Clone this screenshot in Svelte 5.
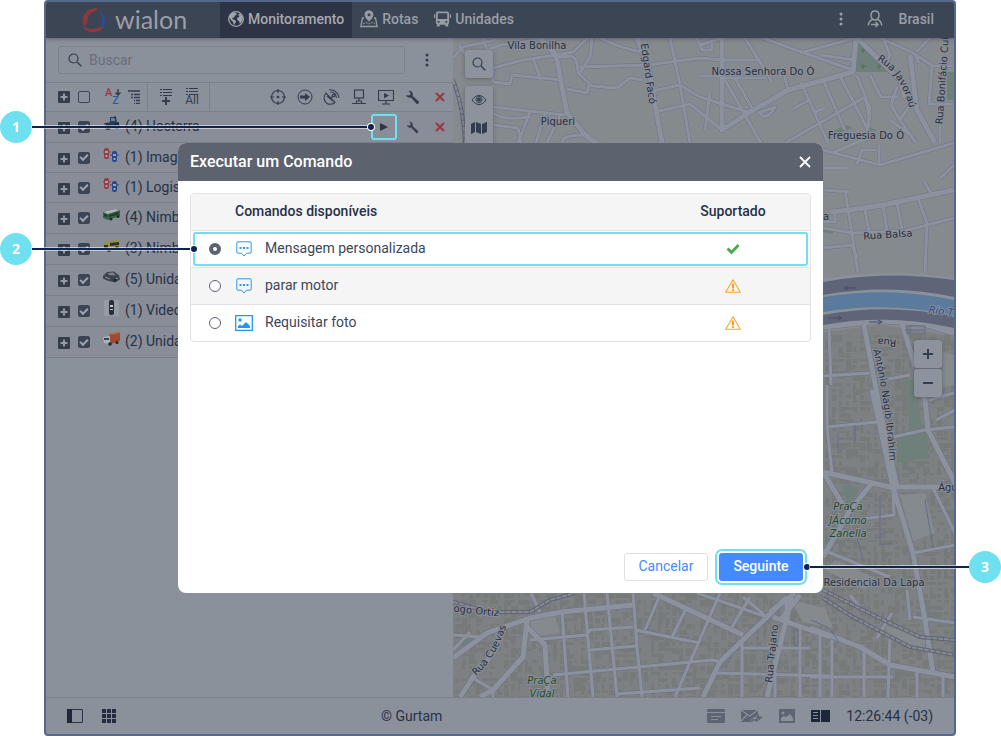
<script lang="ts">
  type Unit = { count: number; name: string; kind: string; short?: boolean };
  type Command = { id: string; label: string; icon: string; supported: boolean };
  type Label = { text: string; x: number; y: number; r?: number; cls?: string };

  const units: Unit[] = [
    { count: 4, name: "Hecterra", kind: "tractor" },
    { count: 1, name: "Imag", kind: "cars", short: true },
    { count: 1, name: "Logis", kind: "cars", short: true },
    { count: 4, name: "Nimb", kind: "bus" },
    { count: 3, name: "Nimb", kind: "yellow" },
    { count: 5, name: "Unida", kind: "car" },
    { count: 1, name: "Video", kind: "camera" },
    { count: 2, name: "Unida", kind: "truck" },
  ];

  const commands: Command[] = [
    { id: "custom", label: "Mensagem personalizada", icon: "message", supported: true },
    { id: "stop", label: "parar motor", icon: "message", supported: false },
    { id: "photo", label: "Requisitar foto", icon: "photo", supported: false },
  ];

  let selected = $state("custom");
  let query = $state("");

  const minorRoads = [
    "M453 58L463 47L495 40M459 45L466 56M483 38L487 50L500 45L530 41M493 68L523 60L556 55L573 52L588 38",
    "M533 58L541 80M493 82L510 84L512 75L563 80M493 68V82M558 57L572 56Q578 60 578 73L592 86L617 88L630 78L643 80",
    "M592 38L590 57L580 73M580 67L648 65M567 89L587 93L589 85M493 107L565 115M493 113Q503 121 530 117",
    "M530 112L518 143M545 113L536 143M560 115L547 143M493 125L518 128L521 143M563 143Q560 134 590 135",
    "M600 38Q620 48 641 52M648 65L700 58L722 60L760 60M648 92L680 85L700 97L748 112M700 76H722M722 78H767",
    "M655 112L690 104L722 130M670 38L680 85L690 143M700 45L722 38M710 92L705 130M697 38L702 50H712V43",
    "M745 38L772 82M763 38L810 55L853 70M725 80L762 145M735 78L752 108M782 66L788 90M801 82L828 143M823 80L845 130M840 76L868 130",
    "M785 143L865 97M793 109L811 99M815 112L825 108M758 113L775 107Q766 122 760 113M800 53L855 38M820 55L856 60",
    "M880 38L913 53L933 66L953 66M932 66L929 105M929 104H954M940 104V143M870 75L881 97H897M897 87L891 105L900 120L912 102",
    "M865 97L870 120M883 38L890 55L887 63M916 52L930 38M916 55L919 63M900 120L916 143M890 120L912 136",
    "M857 76L870 108L868 128M823 150L880 165L954 143M857 164L862 150H876M879 145V164M823 168H847M832 153L868 138",
    "M823 190L850 192M845 190L858 273M823 228L853 233L905 231L954 218M865 210L869 232M883 205L887 231M897 203L902 229M918 198L927 223",
    "M823 248L853 245M852 245L857 258M927 223L925 273M835 213V222H823M924 181L932 195M954 165L940 178",
    "M829 327L831 385M823 376L870 373M883 380L910 375M827 385V427L832 472M827 427L877 422M893 437L925 430L955 427",
    "M893 490L894 515L853 520M933 488L955 533M913 553L955 545M823 550L890 577M907 590L910 620M913 617L955 623M929 400L954 393M936 420L955 410",
    "M810 677H893M832 640V697M864 648V697M890 637L888 697M917 672V697M943 676V697M877 638L892 613M850 595L862 610",
    "M562 612L568 697M584 593L593 697M607 593L617 697M633 593L637 647L642 697M635 630L700 643M587 635L590 630L633 627",
    "M530 640L587 635M553 675L713 660L720 662M590 650L637 646M660 595L645 630M687 607L672 637M720 593L675 697M750 597L732 627",
    "M742 640V697M742 648H810M717 673L830 676M800 627V697M617 694L700 688M531 593L540 612M453 635L480 637M453 650L470 632",
    "M473 678L493 690M493 690V697M767 617L743 597M697 593L767 617M820 634V697M775 640V697",
  ];

  const majorRoads = [
    "M540 38L556 55L567 113L587 137L600 145",
    "M637 38L648 65L662 143",
    "M722 38V130L750 112L788 90L853 72L856 38",
    "M857 38L900 80L905 98M910 55L917 110L935 143",
    "M830 212L850 210L883 205L930 195L954 190",
    "M823 327L880 321L920 323L954 333",
    "M864 325L880 410L897 487M902 323L925 400L928 430L955 483",
    "M872 390L893 487L913 553L925 620L933 673",
    "M823 472L890 487H955M873 482L850 510L823 557M823 472L843 505",
    "M810 628L860 647L890 665L955 677",
    "M453 658L487 633L530 618L562 612L633 605",
    "M527 620L523 657L493 690L480 697M527 627L545 645L548 697",
    "M502 630L492 655L473 677L460 697",
    "M653 593L743 635M787 597L767 617L743 640L720 662L703 697M792 597L767 697M773 617L830 637",
    "M770 612L795 593M782 618L800 595M787 600V622",
  ];

  const rails = [
    "M453 80Q463 105 465 143",
    "M823 590L877 617L920 637L955 640",
    "M823 598L853 617L910 647L955 655",
    "M453 602L490 612H530L550 600L575 593",
  ];

  const labels: Label[] = [
    { text: "Vila Bonilha", x: 537, y: 49 },
    { text: "Piqueri", x: 558, y: 125 },
    { text: "Nossa Senhora Do Ó", x: 763, y: 75 },
    { text: "Freguesia Do Ó", x: 866, y: 139 },
    { text: "Edgard Facó", x: 645, y: 74, r: 82 },
    { text: "Rua Bonifácio Cuba", x: 946, y: 76, r: -86 },
    { text: "Rua Balsa", x: 888, y: 238, r: -4 },
    { text: "a", x: 826, y: 220 },
    { text: "Rua", x: 887, y: 339, r: 184 },
    { text: "Água", x: 951, y: 491 },
    { text: "Residencial Da Lapa", x: 874, y: 586 },
    { text: "ogo Ortiz", x: 476, y: 614, r: 6 },
    { text: "Rua Trajano", x: 775, y: 654, r: -84 },
    { text: "Rio Tie", x: 945, y: 315, r: 8, cls: "water" },
    { text: "PraÇa", x: 848, y: 510, cls: "park" },
    { text: "JÁcomo", x: 848, y: 524, cls: "park" },
    { text: "Zanella", x: 848, y: 537, cls: "park" },
    { text: "PraÇa", x: 542, y: 684, cls: "park" },
    { text: "Vidal", x: 542, y: 697, cls: "park" },
  ];

  // small building footprints, seeded so that the map looks the same on every load
  function footprints(x0: number, y0: number, x1: number, y1: number, seed: number): string {
    let s = seed;
    const rnd = () => (s = (s * 16807) % 2147483647) / 2147483647;
    let d = "";
    for (let y = y0; y < y1; y += 6) {
      for (let x = x0; x < x1; x += 7) {
        if (rnd() < 0.2) continue;
        const w = Math.round(2 + rnd() * 6);
        const h = Math.round(2 + rnd() * 5);
        d += `M${x} ${y}h${w}v${h}h-${w}z`;
      }
    }
    return d;
  }

  const buildings = [
    footprints(455, 594, 820, 697, 11),
    footprints(825, 335, 954, 480, 37),
    footprints(825, 492, 954, 697, 71),
  ];
</script>

{#snippet wrench(size: number)}
  <svg width={size} height={size} viewBox="0 0 16 16" aria-hidden="true">
    <path d="M1 5.2A4 4 0 0 0 6.300 8l5.800 6.300a1.600 1.600 0 0 0 2.400-2.200L8.200 6.400A4 4 0 0 0 3.800 1l2.100 2.200-.5 2-2 .6z" fill="currentColor" />
  </svg>
{/snippet}

{#snippet cross()}
  <svg width="10" height="10" viewBox="0 0 10 10" aria-hidden="true">
    <path d="M1 1l8 8M9 1l-8 8" stroke="#9c353f" stroke-width="2" />
  </svg>
{/snippet}

{#snippet plus()}
  <svg width="12" height="12" viewBox="0 0 12 12" aria-hidden="true">
    <rect width="12" height="12" rx="1" fill="#343d4c" />
    <path d="M6 2.500v7M2.500 6h7" stroke="#959aa4" stroke-width="2" />
  </svg>
{/snippet}

{#snippet magnifier()}
  <svg width="14" height="14" viewBox="0 0 14 14" fill="none" stroke="#343d4d" aria-hidden="true">
    <circle cx="5.500" cy="5.500" r="4.500" stroke-width="1.200" />
    <path d="M9 9l4.300 4.300" stroke-width="1.400" />
  </svg>
{/snippet}

{#snippet dots()}
  <svg width="4" height="14" viewBox="0 0 4 14" fill="currentColor" aria-hidden="true">
    <circle cx="2" cy="2" r="1.500" /><circle cx="2" cy="7" r="1.500" /><circle cx="2" cy="12" r="1.500" />
  </svg>
{/snippet}

{#snippet vehicle(kind: string)}
  <svg width="18" height="16" viewBox="0 0 18 16" aria-hidden="true">
    {#if kind === "tractor"}
      <path d="M7 1h6l1 5h2v5H5L3 8l4-2z" fill="#263d62" />
      <path d="M8 2h4v3H8z" fill="#71849b" />
      <circle cx="5" cy="11" r="3" fill="#20293a" /><circle cx="13.500" cy="10" r="3" fill="#20293a" />
      <circle cx="5" cy="11" r="1" fill="#7f8896" /><circle cx="13.500" cy="10" r="1" fill="#7f8896" />
      <path d="M12 0v3M1 8l4-1" stroke="#20293a" />
    {:else if kind === "cars"}
      <rect x="1" y="1" width="5" height="11" rx="2" fill="#963c43" />
      <path d="M2 4h3v2H2zM2.500 8h2v2h-2z" fill="#a1a6ae" /><path d="M0 4v2M7 4v2" stroke="#963c43" />
      <rect x="9" y="4" width="5" height="11" rx="2" fill="#29478c" />
      <path d="M10 7h3v2h-3zM10.500 11h2v2h-2z" fill="#a1a6ae" /><path d="M8 7v2M15 7v2" stroke="#29478c" />
    {:else if kind === "bus"}
      <path d="M0 5l12-3 5 1v6L5 13l-5-2z" fill="#31663e" />
      <path d="M0 5l12-3 5 1L5 7z" fill="#aeb5b8" /><path d="M1 7l3 1v2L1 9zM6 8l10-3v2L6 10z" fill="#253040" />
      <circle cx="8" cy="12" r="1.500" fill="#202632" /><circle cx="15" cy="9.500" r="1.500" fill="#202632" />
    {:else if kind === "yellow"}
      <path d="M0 6l6-3 10-1 1 2v6L5 13l-5-2z" fill="#9b9135" />
      <path d="M1 7h4v3H1zM7 5l9-1v3l-9 1z" fill="#29303b" />
      <circle cx="6" cy="12" r="2" fill="#222936" /><circle cx="14" cy="10" r="2" fill="#222936" />
    {:else if kind === "car"}
      <path d="M0 7l4-4 7-.5 5 4 1 4-5 3-8-2-4-2z" fill="#3d434d" />
      <path d="M5 4l5-.5 3 3-7-.5z" fill="#7f8690" /><path d="M2 8l5 2M12 10l3-1" stroke="#8d939d" />
      <circle cx="12" cy="11" r="1.500" fill="#1c2330" />
    {:else if kind === "camera"}
      <rect x="1" width="15" height="16" fill="#969ba3" />
      <rect x="6" y="0" width="5" height="15" rx="2" fill="#272f3c" />
      <path d="M7 5h3v2H7zM7 9h3v1H7z" fill="#c4c8cd" />
    {:else}
      <path d="M6 3l10-2 1 1v8L8 13z" fill="#a04a32" /><path d="M6 3l10-2 1 1-9 2z" fill="#bc694c" />
      <path d="M0 6l7-1v8l-6-1z" fill="#aeb2b8" /><path d="M1 7h5v2H1z" fill="#37465c" />
      <circle cx="7" cy="13" r="1.800" fill="#202733" /><circle cx="14" cy="11.500" r="1.500" fill="#202733" />
    {/if}
  </svg>
{/snippet}

<div class="page">
  <div class="window">
    <header class="topbar">
      <div class="logo">
        <svg width="25" height="26" viewBox="0 0 25 26" aria-hidden="true">
          <path d="M1 17C-1 8 6 1 14 1c2 0 1 3-1 3.500C6 6 6 11 5 16c-1 3-3 3-4 1z" fill="#8d3840" />
          <path d="M17 5c5 2 8 8 5 15-1 2-3 1-2-1 1-5 0-9-3-14z" fill="#2c4b9c" />
          <path d="M2 20c5 3 11 2 17 0 2 0 2 2 0 3-5 3-13 3-17-1-1-1-1-2 0-2z" fill="#8d3840" />
        </svg>
        <span>wialon</span>
      </div>
      <nav>
        <a class="tab active" href="#monitoring">
          <svg width="16" height="16" viewBox="0 0 16 16" aria-hidden="true">
            <circle cx="8" cy="8" r="7.300" fill="none" stroke="#a0a5ac" stroke-width="1.300" />
            <path d="M2 4l3-2.500 3 .5 1 1.500-2 1-1 2-2 .5 1 1.500 2 .5 1 1.500-1 2-1 1.500-1-3-2-2L1 6zM10 3l3 .5 1.800 3-.5 3L12 13l-1-3-2-1 .5-2.500 2-.5z" fill="#a0a5ac" />
          </svg>
          Monitoramento
        </a>
        <a class="tab" href="#routes">
          <svg width="18" height="18" viewBox="0 0 18 18" fill="none" stroke="#969ba4" aria-hidden="true">
            <path d="M4 8H2.500L.8 16.500h16.400L15.500 8H14" stroke-width="1.300" />
            <path d="M9 .8a4 4 0 0 0-4 4c0 2.500 4 6.500 4 6.500s4-4 4-6.500a4 4 0 0 0-4-4z" fill="#969ba4" />
            <circle cx="9" cy="4.800" r="1.500" fill="#3c4554" stroke="none" />
            <path d="M3 14l3-1.500 3 1.500 3-1.500 3 1.500" stroke-dasharray="2 1" />
          </svg>
          Rotas
        </a>
        <a class="tab" href="#units">
          <svg width="17" height="16" viewBox="0 0 18 16" fill="#969ba4" aria-hidden="true">
            <path d="M3 0h12l1 2v11h-1v3h-3v-2H6v2H3v-3H2V2zM4 2v6h10V2zM4 10v2h2v-2zM12 10v2h2v-2z" fill-rule="evenodd" />
            <path d="M0 3h1.300v4H0zM16.700 3H18v4h-1.300z" />
          </svg>
          Unidades
        </a>
      </nav>
      <div class="account">
        <button type="button" aria-label="Mais">{@render dots()}</button>
        <svg width="16" height="18" viewBox="0 0 16 18" fill="none" stroke="#969ba4" stroke-width="1.500" aria-hidden="true">
          <path d="M8 1C5 1 4 3 4 5.500S6 10 8 10s4-2 4-4.500S11 1 8 1z" />
          <path d="M5.500 9.500C3 10.500 1.500 12 1.300 15.500M10.500 9.500c2.500 1 4 2.500 4.200 6M4 14.500h7M8.500 12l2.500 2.500L8.500 17" />
        </svg>
        <span>Brasil</span>
      </div>
    </header>

    <div class="main">
      <aside class="sidebar">
        <div class="search">
          <label class="search-box">
            {@render magnifier()}
            <input type="text" placeholder="Buscar" aria-label="Buscar" bind:value={query} />
          </label>
          <button type="button" aria-label="Opções">{@render dots()}</button>
        </div>

        <div class="tools">
          <button class="slot" type="button" aria-label="Expandir tudo">{@render plus()}</button>
          <span class="slot"><input class="check" type="checkbox" aria-label="Selecionar tudo" /></span>
          <button class="tool az" type="button" aria-label="Ordenar">
            <span class="a">A</span><span class="z">Z</span>
            <svg width="6" height="7" viewBox="0 0 6 7" aria-hidden="true"><path d="M3 0v6M.5 3.500L3 6l2.500-2.500" stroke="#343d4d" stroke-width="1.500" fill="none" /></svg>
          </button>
          <button class="tool group" type="button" aria-label="Agrupar">
            <svg width="14" height="14" viewBox="0 0 14 14" aria-hidden="true"><path d="M1 1h12M4 4.500h2M7 4.500h6M4 7.500h2M7 7.500h6M7 10.500h1M9 10.500h4M7 13.300h1M9 13.300h4" stroke="#343d4d" stroke-width="1.300" /></svg>
          </button>
          <i></i>
          <button class="tool" type="button" aria-label="Adicionar">
            <svg width="14" height="16" viewBox="0 0 14 16" stroke="#343d4d" aria-hidden="true"><path d="M1 .5h2M4 .5h9M1 3.500h2M4 3.500h9M1 6.500h2M4 6.500h9" /><path d="M7 8v8M3 12h8" stroke-width="2" /></svg>
          </button>
          <button class="tool all" type="button">
            <svg width="14" height="7" viewBox="0 0 14 7" stroke="#343d4d" aria-hidden="true"><path d="M1 .5h2M4 .5h9M1 3.500h2M4 3.500h9M1 6.500h2M4 6.500h9" /></svg>
            All
          </button>
          <i></i>
          <div class="actions">
            <button type="button" aria-label="Localizar">
              <svg width="16" height="16" viewBox="0 0 16 16" fill="none" stroke="#343d4d" aria-hidden="true"><circle cx="8" cy="8" r="6.500" stroke-width="1.200" /><path d="M8 0v4M8 12v4M0 8h4M12 8h4" stroke-width="1.200" /><circle cx="8" cy="8" r="1" fill="#343d4d" /></svg>
            </button>
            <button type="button" aria-label="Seguir">
              <svg width="16" height="16" viewBox="0 0 16 16" aria-hidden="true"><circle cx="8" cy="8" r="7" fill="none" stroke="#343d4d" /><path d="M3 6.500h5V4l5 4-5 4V9.500H3z" fill="#343d4d" /></svg>
            </button>
            <button type="button" aria-label="Satélite">
              <svg width="17" height="16" viewBox="0 0 17 16" fill="none" stroke="#343d4d" stroke-width="1.100" aria-hidden="true"><path d="M3 4C0 8 1 13 4 14.500s6 .5 8-1zM8 9l2-2M7 3c3 0 6 2 6.500 6M6 .8c5-.5 9.500 3 10 8M4 7l6 5" /><circle cx="10.500" cy="6.500" r="1.300" /></svg>
            </button>
            <button type="button" aria-label="Conexão">
              <svg width="16" height="16" viewBox="0 0 16 16" fill="none" stroke="#343d4d" aria-hidden="true"><rect x="3.500" y="1" width="9" height="8" stroke-width="1.200" /><path d="M8 9v3M1 14.500h14M5.500 12h5v2.500h-5z" stroke-width="1.200" /></svg>
            </button>
            <button type="button" aria-label="Vídeo">
              <svg width="16" height="16" viewBox="0 0 16 16" aria-hidden="true"><path d="M.5 1.500h15v10H.5zM8 12v2.500M4 15h8" fill="none" stroke="#343d4d" stroke-width="1.200" /><path d="M6 4l5 2.500L6 9.500z" fill="#343d4d" /></svg>
            </button>
            <button type="button" aria-label="Propriedades">{@render wrench(15)}</button>
            <button type="button" aria-label="Remover tudo">{@render cross()}</button>
          </div>
        </div>

        <ul>
          {#each units as unit, i}
            <li class:short={unit.short}>
              <button class="slot expand" type="button" aria-label="Expandir">{@render plus()}</button>
              <span class="slot"><input class="check" type="checkbox" checked aria-label={unit.name} /></span>
              <span class="vehicle">{@render vehicle(unit.kind)}</span>
              <span class="name">({unit.count}) {unit.name}</span>
              {#if i === 0}
                <div class="actions">
                  <button class="run" type="button" aria-label="Executar comando">
                    <svg width="8" height="8" viewBox="0 0 8 8" aria-hidden="true"><path d="M0 0l8 4-8 4z" fill="#2d3443" /></svg>
                  </button>
                  <button type="button" aria-label="Propriedades">{@render wrench(13)}</button>
                  <button type="button" aria-label="Remover">{@render cross()}</button>
                </div>
              {/if}
            </li>
          {/each}
        </ul>
      </aside>

      <section class="map" aria-label="Mapa">
        <svg class="canvas" viewBox="453 38 501 659" preserveAspectRatio="xMinYMin slice">
          <rect x="453" y="38" width="501" height="659" fill="#858a8e" />
          <path d="M823 332L880 325L954 336V697H453V590H823z" fill="#7d8183" />
          <g class="blocks">
            {#each buildings as d}<path {d} />{/each}
          </g>
          <g fill="#858a8e">
            <path d="M530 620l25-5 5 18-28 4zM790 600l35 8 8 20-30-6zM918 345l36 10v30l-30 5zM835 560l40 18-10 12-40-20zM885 625l40 15v12l-35-12zM900 495l25-2 10 40-22 8z" />
          </g>
          <g fill="#6e8079">
            <path d="M858 40L890 72H855zM947 72h7v28h-7zM827 133l20-8 6 3-24 8zM867 125l10 6h-8zM823 228l10 2v4l-10-2z" />
            <path d="M897 437l30-4 2 25-32 5zM904 380h10l9 50-12 2zM842 485l18 2-12 18zM462 640l15-2-14 14zM542 668l4 4v6h-6z" />
          </g>
          <path d="M863 48v5M861 50h5M863 64v5M861 66h5M879 64v5M877 66h5" stroke="#4f7358" fill="none" />

          <g class="casing minor">{#each minorRoads as d}<path {d} />{/each}</g>
          <g class="casing major">{#each majorRoads as d}<path {d} />{/each}</g>
          <g class="fill minor">{#each minorRoads as d}<path {d} />{/each}</g>
          <g class="fill major">{#each majorRoads as d}<path {d} />{/each}</g>

          <path d="M823 279Q885 268 954 278V332Q890 316 823 327z" fill="#8b919a" />
          <path d="M823 282Q885 270 954 280V297Q890 283 823 295z" fill="#5f6579" />
          <path d="M823 297Q890 286 954 300V315Q885 301 823 312z" fill="#5b7b9c" />
          <path d="M823 315Q885 303 954 316V328Q890 313 823 325z" fill="#5f6579" />
          <path d="M857 288h-13l4-2m-4 2l4 2M828 318h14l-4-2m4 2l-4 2M869 322h13l-4-2m4 2l-4 2" fill="none" stroke="#454c66" />
          <path d="M907 326h18v8h-18zM910 326v8M905 330h20M855 425v18M838 433v20M880 495v50l12-2M880 534l8-2M855 530l8 30M925 500l8 48M811 620l18 8 10 14M794 630v16h4v-16z" fill="none" stroke="#666d89" />

          {#each rails as d}
            <path {d} fill="none" stroke="#5f6575" stroke-width="4" />
            <path {d} fill="none" stroke="#858a93" stroke-width="2" stroke-dasharray="5 1" />
          {/each}

          {#each labels as l}
            <text class={l.cls} x={l.x} y={l.y} transform={l.r ? `rotate(${l.r} ${l.x} ${l.y})` : undefined}>{l.text}</text>
          {/each}
          <path id="javorau" d="M877 60Q904 76 911 116" fill="none" />
          <path id="nagib" d="M873 350Q885 395 891 476" fill="none" />
          <path id="cuevas" d="M476 676Q499 655 509 616" fill="none" />
          <text class="along"><textPath href="#javorau">Rua Javoraú</textPath></text>
          <text class="along"><textPath href="#nagib">Antônio Nagib Ibrahim</textPath></text>
          <text class="along"><textPath href="#cuevas">Rua Cuevas</textPath></text>
        </svg>

        <div class="map-tools">
          <button type="button" aria-label="Buscar no mapa">{@render magnifier()}</button>
          <div class="layers">
            <button type="button" aria-label="Visibilidade">
              <svg width="16" height="12" viewBox="0 0 16 12" fill="none" stroke="#343d4d" aria-hidden="true"><path d="M1 6c4-6 10-6 14 0-4 6-10 6-14 0z" /><circle cx="8" cy="5.500" r="3" /><circle cx="8" cy="5.500" r="1.500" fill="#343d4d" /></svg>
            </button>
            <button type="button" aria-label="Camadas">
              <svg width="16" height="12" viewBox="0 0 16 12" fill="#343d4d" aria-hidden="true"><path d="M0 2l4-2v10l-4 2zM5 0l5 2v10l-5-2zM11 2l5-2v10l-5 2z" /></svg>
            </button>
          </div>
        </div>
        <div class="zoom">
          <button type="button" aria-label="Aproximar"><svg width="10" height="10" viewBox="0 0 10 10" aria-hidden="true"><path d="M5 0v10M0 5h10" stroke="#343d4d" stroke-width="2" /></svg></button>
          <button type="button" aria-label="Afastar"><svg width="10" height="10" viewBox="0 0 10 10" aria-hidden="true"><path d="M0 5h10" stroke="#343d4d" stroke-width="2" /></svg></button>
        </div>
      </section>
    </div>

    <footer>
      <div class="views">
        <svg width="16" height="14" viewBox="0 0 16 14" aria-hidden="true"><path d="M.5.5h15v13H.5z" fill="none" stroke="#2b3444" /><path d="M0 0h5v14H0z" fill="#1d273a" /></svg>
        <svg width="14" height="14" viewBox="0 0 14 14" fill="#242d3f" aria-hidden="true"><path d="M0 0h4v4H0zM5 0h4v4H5zM10 0h4v4h-4zM0 5h4v4H0zM5 5h4v4H5zM10 5h4v4h-4zM0 10h4v4H0zM5 10h4v4H5zM10 10h4v4h-4z" /></svg>
      </div>
      <span>© Gurtam</span>
      <div class="status">
        <svg width="18" height="14" viewBox="0 0 18 14" fill="#5d6472" aria-hidden="true"><path d="M0 0h18v3H0zM0 4h18v10H0zM4 7v1h10V7zM4 10v1h7v-1z" fill-rule="evenodd" /></svg>
        <svg width="22" height="14" viewBox="0 0 22 14" aria-hidden="true"><path d="M0 1h17v5l-5 3v4H0z" fill="#5d6472" /><path d="M0 1l8.500 6L17 1M0 12l6-6" fill="none" stroke="#8b919a" stroke-width="1.300" /><path d="M22 7.500h-4V5l-3.500 3.500 3.500 3" fill="#5d6472" /><path d="M10 10h5V8l3 3-3 3v-2h-5z" fill="#5d6472" stroke="#8b919a" stroke-width=".5" /></svg>
        <svg width="16" height="14" viewBox="0 0 16 14" aria-hidden="true"><path d="M0 0h16v14H0z" fill="#5d6472" /><circle cx="4" cy="4" r="1.500" fill="#8b919a" /><path d="M2 12V9l3-2 2 1 4-3 3 4v3z" fill="#8b919a" /></svg>
        <svg width="19" height="12" viewBox="0 0 19 12" aria-hidden="true"><path d="M0 0h9v12H0zM10 0h9v12h-9z" fill="#1d273a" /><path d="M2 2.500h5M2 5.500h5M2 8.500h5" stroke="#8b919a" /></svg>
        <time>12:26:44 (-03)</time>
      </div>
    </footer>
  </div>

  <div class="backdrop">
    <div class="dialog" role="dialog" aria-modal="true" aria-labelledby="dialog-title">
      <div class="dialog-head">
        <h2 id="dialog-title">Executar um Comando</h2>
        <button type="button" aria-label="Fechar">
          <svg width="12" height="12" viewBox="0 0 12 12" aria-hidden="true"><path d="M1 1l10 10M11 1L1 11" stroke="#fff" stroke-width="1.800" /></svg>
        </button>
      </div>
      <div class="dialog-body">
        <table>
          <thead>
            <tr><th class="pick"></th><th>Comandos disponíveis</th><th class="supported">Suportado</th></tr>
          </thead>
          <tbody>
            {#each commands as command}
              <tr class:selected={selected === command.id}>
                <td class="pick"><input type="radio" name="command" id={command.id} value={command.id} bind:group={selected} /></td>
                <td>
                  <label for={command.id}>
                    {#if command.icon === "message"}
                      <svg width="18" height="16" viewBox="0 0 18 16" aria-hidden="true"><path d="M3 .8h12a1.200 1.200 0 0 1 1.200 1.200v9a1.200 1.200 0 0 1-1.200 1.200h-3.500L9 15l-2.500-2.800H3A1.200 1.200 0 0 1 1.800 11V2A1.200 1.200 0 0 1 3 .8z" fill="none" stroke="#2f96ed" /><path d="M4.500 6h2v2h-2zM8 6h2v2H8zM11.500 6h2v2h-2z" fill="#2f96ed" /></svg>
                    {:else}
                      <svg width="18" height="16" viewBox="0 0 18 16" aria-hidden="true"><path d="M.7.700h16.600v14.600H.7z" fill="none" stroke="#2196f3" stroke-width="1.300" /><circle cx="5" cy="5" r="1.700" fill="#2196f3" /><path d="M3 13v-2l2-1.500 2 1.500 4-4 4 4v2z" fill="#2196f3" /></svg>
                    {/if}
                    {command.label}
                  </label>
                </td>
                <td class="supported">
                  {#if command.supported}
                    <svg width="14" height="12" viewBox="0 0 14 12" role="img" aria-label="Sim"><path d="M1.500 5.500l4 4L12.500 2" fill="none" stroke="#45ae4b" stroke-width="2.800" /></svg>
                  {:else}
                    <svg width="16" height="14" viewBox="0 0 16 14" role="img" aria-label="Aviso"><path d="M8 .8L15.300 13.300H.7z" fill="none" stroke="#fba42c" stroke-width="1.100" stroke-linejoin="round" /><path d="M8 4.500v5M8 10.300v1.800" stroke="#fb9d1d" stroke-width="2" /></svg>
                  {/if}
                </td>
              </tr>
            {/each}
          </tbody>
        </table>
      </div>
      <div class="dialog-foot">
        <button class="cancel" type="button">Cancelar</button>
        <button class="next" type="button">Seguinte</button>
      </div>
    </div>
  </div>

  <div class="callout one"><b>1</b><span class="line"></span><span class="dot"></span></div>
  <div class="callout two"><b>2</b><span class="line"></span><span class="dot"></span></div>
  <div class="callout three"><span class="dot"></span><span class="line"></span><b>3</b></div>
</div>

<style>
  .page {
    --cyan: #6fe0ef;
    --ink: #343d4d;
    --panel: #8b919b;
    position: relative;
    box-sizing: border-box;
    display: flex;
    min-height: 100vh;
    padding: 0 45px 0 44px;
    background: #fff;
    color: #273146;
    font: 14px/20px Roboto, "Liberation Sans", sans-serif;
  }

  :global(body) {
    margin: 0;
  }

  svg {
    display: block;
    flex: none;
  }

  button {
    display: flex;
    align-items: center;
    justify-content: center;
    border: 0;
    padding: 0;
    background: none;
    color: var(--ink);
    font: inherit;
    cursor: pointer;
  }

  .window {
    display: flex;
    flex: 1;
    flex-direction: column;
    min-width: 0;
    overflow: hidden;
    border: 2px solid #55678a;
    border-radius: 4px;
    background: var(--panel);
  }

  .topbar {
    z-index: 1;
    display: flex;
    height: 36px;
    background: #3c4554;
    box-shadow: 0 1px 4px rgb(30 36 50 / 40%);
    color: #9a9fa8;
    font-weight: 500;
  }

  .logo {
    display: flex;
    align-items: center;
    box-sizing: border-box;
    width: 174px;
    gap: 8px;
    padding-left: 36px;
    font: 400 25px/32px Lato, sans-serif;
  }

  .logo span {
    padding-bottom: 3px;
  }

  nav {
    display: flex;
  }

  .tab {
    display: flex;
    align-items: center;
    gap: 4px;
    padding: 0 8px 2px;
    color: inherit;
    text-decoration: none;
  }

  .tab.active {
    background: #2c3445;
    color: #a5aab2;
  }

  .account {
    display: flex;
    align-items: center;
    gap: 16px;
    margin-left: auto;
    padding: 0 20px 2px 0;
  }

  .account button {
    width: 20px;
    color: inherit;
  }

  .main {
    display: flex;
    flex: 1;
  }

  .sidebar {
    flex: none;
    width: 407px;
  }

  .search {
    display: flex;
    align-items: center;
    height: 44px;
    gap: 8px;
    padding-left: 12px;
  }

  .search-box {
    display: flex;
    align-items: center;
    box-sizing: border-box;
    width: 347px;
    height: 28px;
    gap: 7px;
    border: 1px solid #7c828d;
    border-radius: 3px;
    padding-left: 9px;
  }

  .search-box input {
    flex: 1;
    min-width: 0;
    border: 0;
    padding: 0;
    outline: 0;
    background: none;
    color: #202a3e;
    font: inherit;
  }

  .search-box input::placeholder {
    color: #686e7a;
    opacity: 1;
  }

  .search button {
    width: 28px;
    height: 28px;
  }

  .tools,
  li {
    display: flex;
    align-items: center;
    box-sizing: border-box;
    height: 29px;
    border-top: 1px solid #7a808a;
    padding-left: 8px;
  }

  .tools i {
    align-self: stretch;
    width: 1px;
    margin-right: 5px;
    background: #7a808a;
  }

  .slot {
    display: flex;
    justify-content: center;
    width: 20px;
  }

  .check {
    display: grid;
    place-content: center;
    appearance: none;
    box-sizing: border-box;
    width: 12px;
    height: 12px;
    margin: 0;
    border: 1px solid #3c4555;
    border-radius: 2px;
  }

  .check:checked {
    background: #3c4555;
  }

  .check:checked::before {
    width: 6px;
    height: 3px;
    margin-bottom: 2px;
    border: solid #a2a7af;
    border-width: 0 0 2px 2px;
    transform: rotate(-45deg);
    content: "";
  }

  .tool {
    width: 26px;
  }

  .az {
    position: relative;
    height: 18px;
    margin-left: 5px;
    font-size: 11px;
    font-weight: 500;
    line-height: 10px;
  }

  .az .a {
    align-self: flex-start;
    color: #9c353f;
  }

  .az .z {
    align-self: flex-end;
    color: #245e96;
  }

  .az svg {
    position: absolute;
    top: 1px;
    right: 4px;
  }

  .group {
    width: 18px;
    margin-right: 4px;
  }

  .all {
    flex-direction: column;
    margin-right: 4px;
    font-size: 12px;
    line-height: 11px;
  }

  .actions {
    display: flex;
    margin-left: auto;
  }

  .actions button {
    width: 27px;
    height: 26px;
  }

  .actions .run {
    box-sizing: border-box;
    width: 26px;
    margin-right: 2px;
    border: 2px solid var(--cyan);
    border-radius: 3px;
  }

  ul {
    margin: 0;
    padding: 0;
    list-style: none;
  }

  li {
    height: 31px;
    background: #888d98;
  }

  li.short {
    height: 30px;
  }

  li:last-child {
    height: 32px;
    border-bottom: 1px solid #7a808a;
  }

  .expand {
    padding-top: 2px;
  }

  .vehicle {
    width: 22px;
    margin: 0 0 6px 9px;
  }

  .name {
    padding-bottom: 2px;
    white-space: nowrap;
  }

  .map {
    position: relative;
    flex: 1;
    min-width: 0;
    overflow: hidden;
  }

  .canvas {
    position: absolute;
    width: 100%;
    height: 100%;
  }

  .blocks path {
    fill: #767b7a;
  }

  .casing path,
  .fill path {
    fill: none;
    stroke-linejoin: round;
  }

  .casing path {
    stroke: #6d748b;
  }

  .fill path {
    stroke: #8c929d;
  }

  .casing.minor path {
    stroke-width: 4;
  }

  .casing.major path {
    stroke-width: 6;
  }

  .fill.minor path {
    stroke-width: 3;
  }

  .fill.major path {
    stroke-width: 5;
  }

  .canvas text {
    fill: #272e40;
    stroke: #8b9098;
    stroke-width: 2px;
    paint-order: stroke;
    font: 10px "DejaVu Sans", sans-serif;
    text-anchor: middle;
  }

  .canvas text.along {
    text-anchor: start;
  }

  .canvas text.park {
    fill: #23492f;
    font-style: italic;
  }

  .canvas text.water {
    fill: #254a88;
    font-style: italic;
  }

  .map-tools {
    position: absolute;
    top: 12px;
    left: 12px;
    display: grid;
    gap: 8px;
  }

  .map-tools button,
  .zoom button {
    width: 28px;
    height: 28px;
    border-radius: 3px;
    background: #8d939d;
  }

  .map-tools > button,
  .layers,
  .zoom {
    border-radius: 3px;
    box-shadow: 0 1px 4px rgb(40 46 60 / 40%);
  }

  .layers {
    height: 64px;
    background: #8d939d;
  }

  .zoom {
    position: absolute;
    top: 302px;
    right: 12px;
    display: grid;
    gap: 1px;
    background: #636a78;
  }

  footer {
    display: flex;
    align-items: center;
    justify-content: space-between;
    box-sizing: border-box;
    height: 37px;
    border-top: 1px solid #7a808a;
    padding: 0 21px;
  }

  .views,
  .status {
    display: flex;
    align-items: center;
    gap: 19px;
  }

  .status {
    gap: 16px;
  }

  .backdrop {
    position: absolute;
    inset: 0;
    display: flex;
    align-items: center;
    justify-content: center;
  }

  .dialog {
    display: flex;
    flex-direction: column;
    width: 645px;
    max-width: 90%;
    min-height: 450px;
    overflow: hidden;
    border-radius: 8px;
    background: #fff;
  }

  .dialog-head {
    display: flex;
    align-items: center;
    justify-content: space-between;
    height: 38px;
    padding: 0 12px;
    background: #5d626f;
    color: #fff;
  }

  h2 {
    margin: 0;
    font-size: 16px;
    font-weight: 500;
  }

  .dialog-body {
    flex: 1;
    padding: 12px;
  }

  table {
    width: 100%;
    overflow: hidden;
    border: 1px solid #e2e2e4;
    border-radius: 4px;
    border-spacing: 0;
  }

  tr {
    position: relative;
    height: 37px;
  }

  thead tr {
    height: 36px;
  }

  thead tr,
  tbody tr:nth-child(even) {
    background: #f5f5f6;
  }

  th,
  td {
    padding: 0 0 2px;
    text-align: left;
  }

  th {
    font-weight: 500;
  }

  td {
    border-top: 1px solid #e2e2e4;
    color: #3c475a;
  }

  .pick {
    width: 44px;
  }

  .supported {
    width: 154px;
    text-align: center;
  }

  .supported svg {
    margin: 2px auto 0;
  }

  .selected::after {
    position: absolute;
    inset: 2px 2px 1px;
    border: 2px solid var(--cyan);
    border-radius: 3px;
    pointer-events: none;
    content: "";
  }

  td input {
    display: block;
    appearance: none;
    box-sizing: border-box;
    width: 12px;
    height: 12px;
    margin: 2px 0 0 18px;
    border: 1px solid #5d626f;
    border-radius: 50%;
    background: #fff;
  }

  td input:checked {
    border-width: 4px;
  }

  td label {
    display: flex;
    align-items: center;
    gap: 12px;
  }

  td label svg {
    margin-top: 2px;
  }

  .dialog-foot {
    display: flex;
    justify-content: flex-end;
    gap: 11px;
    padding: 0 20px 12px;
  }

  .dialog-foot button {
    box-sizing: border-box;
    width: 84px;
    height: 28px;
    border-radius: 3px;
    padding-bottom: 2px;
  }

  .cancel {
    border: 1px solid #e0e0e3;
    color: #448aff;
  }

  .next {
    outline: 2px solid var(--cyan);
    outline-offset: 2px;
    background: #448aff;
    color: #fff;
    font-weight: 500;
  }

  .callout {
    position: absolute;
    display: flex;
    align-items: center;
    height: 32px;
    pointer-events: none;
  }

  .callout b {
    width: 32px;
    border-radius: 50%;
    background: var(--cyan);
    color: #fff;
    font: 700 14px/32px "Open Sans", sans-serif;
    text-align: center;
  }

  .line {
    flex: 1;
    height: 2px;
    background: #0d2350;
    box-shadow: 0 0 0 1px rgb(255 255 255 / 55%);
  }

  .dot {
    width: 6px;
    height: 6px;
    border-radius: 50%;
    background: #0d2350;
    box-shadow: 0 0 0 1px #fff;
  }

  .one {
    top: 111px;
    left: 0;
    width: 374px;
  }

  .two {
    top: calc(50% - 135px);
    left: 0;
    width: calc(50% - 304px);
  }

  .three {
    top: calc(50% + 183px);
    right: 0;
    width: calc(50% - 303px);
  }
</style>
